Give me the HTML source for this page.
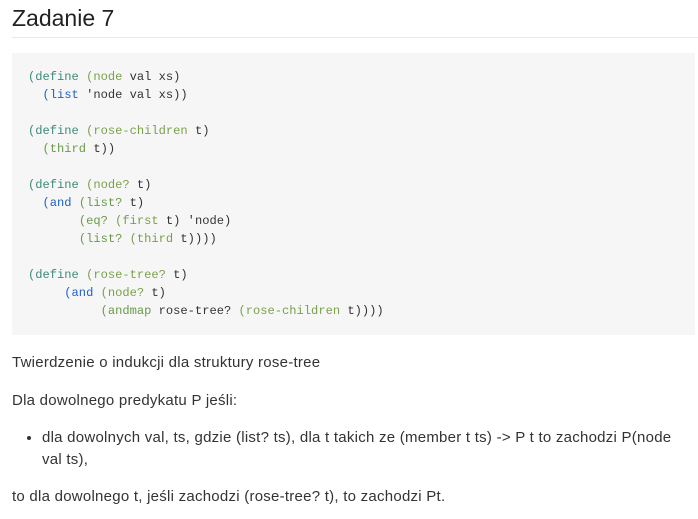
<!DOCTYPE html>
<html><head><meta charset="utf-8"><style>
body{margin:0;background:#fff;font-family:"Liberation Sans",sans-serif;color:#333;width:698px;height:519px;overflow:hidden}
h2{position:absolute;left:12px;top:5px;margin:0;font-size:23px;font-weight:normal;color:#222}
.hr{position:absolute;left:12px;right:0;top:37px;border-top:1px solid #e8e8e8}
pre{position:absolute;left:12px;top:53px;width:683px;height:282px;margin:0;background:#f6f6f6;box-sizing:border-box;padding:15px 16px;font-family:"Liberation Mono",monospace;font-size:12.1px;line-height:18px;color:#333}
.k{color:#3d8a78}.n{color:#7aa04a}.b{color:#2060c8}.g{color:#6a9a4a}
p{position:absolute;left:12px;margin:0;font-size:15px;letter-spacing:.25px;line-height:22px;color:#333}
ul{position:absolute;left:12px;top:427px;margin:0;padding-left:30px;font-size:15px;letter-spacing:.25px;line-height:22px;width:645px}
</style></head><body>
<h2>Zadanie 7</h2><div class="hr"></div>
<pre><span class="k">(define</span> <span class="n">(node</span> val xs)
  <span class="b">(list</span> 'node val xs))

<span class="k">(define</span> <span class="n">(rose-children</span> t)
  <span class="g">(third</span> t))

<span class="k">(define</span> <span class="n">(node?</span> t)
  <span class="b">(and</span> <span class="g">(list?</span> t)
       <span class="g">(eq?</span> <span class="n">(first</span> t) 'node)
       <span class="g">(list?</span> <span class="n">(third</span> t))))

<span class="k">(define</span> <span class="n">(rose-tree?</span> t)
     <span class="b">(and</span> <span class="n">(node?</span> t)
          <span class="g">(andmap</span> rose-tree? <span class="n">(rose-children</span> t))))</pre>
<p style="top:352px">Twierdzenie o indukcji dla struktury rose-tree</p>
<p style="top:390px">Dla dowolnego predykatu P jeśli:</p>
<ul><li>dla dowolnych val, ts, gdzie (list? ts), dla t takich ze (member t ts) -&gt; P t to zachodzi P(node val ts),</li></ul>
<p style="top:486px">to dla dowolnego t, jeśli zachodzi (rose-tree? t), to zachodzi Pt.</p>
</body></html>
